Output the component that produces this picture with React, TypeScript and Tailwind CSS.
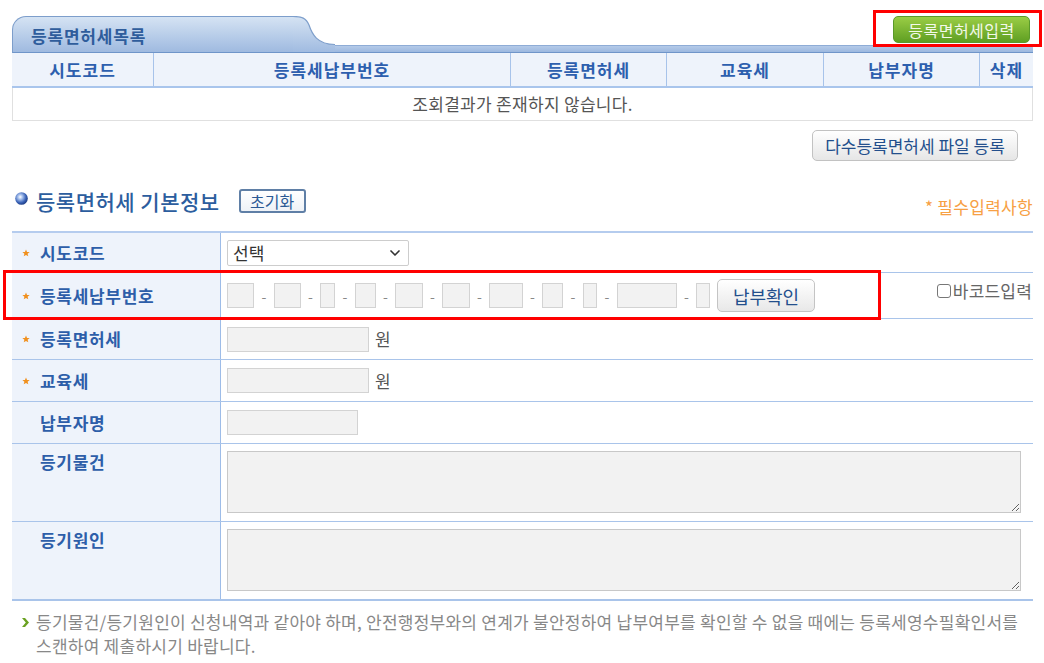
import React from "react";
import { ChevronDown } from "lucide-react";

const listColumns = ["시도코드", "등록세납부번호", "등록면허세", "교육세", "납부자명", "삭제"];

// payment number boxes: width class + width of the dash gap that follows
const payBoxes = [
  { w: "w-[27px]", dash: "w-[20px]" },
  { w: "w-[27px]", dash: "w-[19px]" },
  { w: "w-[15px]", dash: "w-[20px]" },
  { w: "w-[21px]", dash: "w-[19px]" },
  { w: "w-[28px]", dash: "w-[19px]" },
  { w: "w-[28px]", dash: "w-[19px]" },
  { w: "w-[34px]", dash: "w-[19px]" },
  { w: "w-[21px]", dash: "w-[20px]" },
  { w: "w-[14px]", dash: "w-[20px]" },
  { w: "w-[60px]", dash: "w-[19px]" },
  { w: "w-[14px]", dash: "" },
];

function Star() {
  return (
    <svg width="8" height="8" viewBox="0 0 10 10" className="shrink-0">
      <polygon
        points="5,0.5 6.3,3.6 9.6,3.8 7,5.9 7.9,9.2 5,7.4 2.1,9.2 3,5.9 0.4,3.8 3.7,3.6"
        fill="#f0901e"
      />
    </svg>
  );
}

function FormRow({
  label,
  required,
  height,
  top,
  children,
}: {
  label: string;
  required?: boolean;
  height: string;
  top?: boolean;
  children: React.ReactNode;
}) {
  return (
    <div className={`grid grid-cols-[209px_1fr] border-b border-[#a9c4ea] box-border ${height}`}>
      <div
        className={`flex bg-[#eef3fb] border-r border-[#9dbce8] pl-[10px] ${
          top ? "items-start pt-[6px]" : "items-center"
        }`}
      >
        <span className="w-[18px] flex items-center h-[24px]">{required && <Star />}</span>
        <span className="text-[17px] leading-[24px] font-bold tracking-[0.7px] text-[#2d5ea9]">{label}</span>
      </div>
      <div className={`flex pl-[6px] pr-[11px] ${top ? "items-start pt-[7px]" : "items-center"}`}>
        {children}
      </div>
    </div>
  );
}

export default function App() {
  return (
    <div className="relative w-[1044px] h-[663px] overflow-hidden bg-white pt-[16px] pl-[12px] pr-[11px] font-['Noto_Sans_CJK_KR','Noto_Sans',sans-serif]">
      {/* tab header */}
      <div className="flex h-[37px]">
        <div className="w-[281px] h-[37px] rounded-tl-[14px] border-t border-l border-[#7d9ecb] border-b border-b-[#6f95c9] bg-linear-to-b from-[#d5e3f3] to-[#9fbae0] pl-[18px] pt-[7px] box-border">
          <span className="text-[17px] leading-[24px] font-bold tracking-[0.8px] text-[#2f5d9c]">등록면허세목록</span>
        </div>
        <svg width="42" height="37" viewBox="0 0 42 37" className="shrink-0">
          <defs>
            <linearGradient id="tabg" x1="0" y1="0" x2="0" y2="1">
              <stop offset="0" stopColor="#d5e3f3" />
              <stop offset="1" stopColor="#9fbae0" />
            </linearGradient>
          </defs>
          <path d="M0 0.5 C9 0.5 13 2 16 9 C19 18 24 28.5 42 28.5 L42 37 L0 37 Z" fill="url(#tabg)" />
          <path d="M0 0.5 C9 0.5 13 2 16 9 C19 18 24 28.5 42 28.5" fill="none" stroke="#7d9ecb" strokeWidth="1.2" />
          <line x1="0" y1="36.5" x2="42" y2="36.5" stroke="#6f95c9" strokeWidth="1" />
        </svg>
        <div className="flex-1 flex flex-col">
          <div className="flex justify-end pr-[3px]">
            <button className="h-[27px] w-[137px] rounded-[5px] border border-[#5a9a2a] bg-linear-to-b from-[#9acd45] to-[#5f9f22] text-[16px] leading-[24px] tracking-[0.5px] text-[#f3f9ea]">
              등록면허세입력
            </button>
          </div>
          <div className="mt-[2px] h-[8px] border-t border-[#8eacd6] border-b border-b-[#6f95c9] bg-linear-to-b from-[#b4cae8] to-[#9cb8df]" />
        </div>
      </div>

      {/* list table */}
      <div className="grid grid-cols-[142px_357px_156px_157px_156px_1fr] h-[35px] bg-[#eef3fb] border-b-2 border-[#a9c5ec]">
        {listColumns.map((c, i) => (
          <div
            key={c}
            className={`flex items-center justify-center text-[17px] font-bold tracking-[1px] text-[#2d5fae] ${
              i < listColumns.length - 1 ? "border-r border-[#a7c3ea]" : ""
            }`}
          >
            {c}
          </div>
        ))}
      </div>
      <div className="h-[33px] flex items-center justify-center border-x border-b border-[#e0e0e0] text-[17px] tracking-[0.3px] text-[#555]">
        조회결과가 존재하지 않습니다.
      </div>

      <div className="flex justify-end pr-[15px] mt-[9px]">
        <button className="h-[31px] w-[206px] rounded-[5px] border border-[#c2c2c2] bg-linear-to-b from-white to-[#e6e6e6] text-[17px] text-[#234f8c]">
          다수등록면허세 파일 등록
        </button>
      </div>

      {/* section heading */}
      <div className="flex items-start justify-between mt-[25px]">
        <div className="flex items-center h-[30px]">
          <svg width="13" height="13" viewBox="0 0 13 13" className="ml-[3px] mr-[8px] -mt-[5px]">
            <defs>
              <radialGradient id="dotg" cx="0.4" cy="0.38" r="0.6">
                <stop offset="0" stopColor="#ffffff" />
                <stop offset="0.3" stopColor="#a9c2ee" />
                <stop offset="0.75" stopColor="#3a63b7" />
                <stop offset="1" stopColor="#22438d" />
              </radialGradient>
            </defs>
            <circle cx="6.5" cy="6.5" r="6.3" fill="url(#dotg)" />
          </svg>
          <span className="text-[21px] leading-[30px] font-medium text-[#2c5d9e] tracking-[0.5px]">등록면허세 기본정보</span>
          <button className="ml-[19px] h-[24px] w-[67px] rounded-[3px] border-2 border-[#5f7fa6] bg-linear-to-b from-white to-[#eef2f7] text-[16px] leading-[18px] text-[#2c5a95]">
            초기화
          </button>
        </div>
        <span className="mt-[10px] text-[17px] leading-[22px] tracking-[0.3px] text-[#f7a044]">* 필수입력사항</span>
      </div>

      {/* form table */}
      <div className="mt-[13px] border-t-2 border-[#b5ccee]">
        <FormRow label="시도코드" required height="h-[40px]">
          <div className="flex items-center justify-between w-[182px] h-[26px] border border-[#cdcdcd] rounded-[2px] bg-white pl-[5px] pr-[5px]">
            <span className="text-[17px] leading-[24px] text-[#333]">선택</span>
            <ChevronDown size={16} strokeWidth={2.5} className="text-[#333]" />
          </div>
        </FormRow>
        <FormRow label="등록세납부번호" required height="h-[46px]">
          <div className="flex items-center">
            {payBoxes.map((b, i) => (
              <React.Fragment key={i}>
                <div className={`${b.w} h-[25px] border border-[#d3d3d3] bg-[#f2f2f2]`} />
                {b.dash && (
                  <span className={`${b.dash} text-center text-[14px] leading-[20px] text-[#888]`}>-</span>
                )}
              </React.Fragment>
            ))}
            <button className="ml-[7px] h-[33px] w-[98px] rounded-[5px] border border-[#c4c4c4] bg-linear-to-b from-white to-[#e8e8e8] text-[18px] leading-[24px] text-[#234f8c]">
              납부확인
            </button>
          </div>
          <label className="ml-auto -mr-[10px] self-start mt-[7px] flex items-center">
            <span className="w-[14px] h-[14px] rounded-[3px] border-[1.5px] border-[#777] bg-white mr-[2px]" />
            <span className="text-[17px] leading-[22px] tracking-[0.2px] text-[#666]">바코드입력</span>
          </label>
        </FormRow>
        <FormRow label="등록면허세" required height="h-[41px]">
          <div className="w-[142px] h-[25px] border border-[#d3d3d3] bg-[#f2f2f2]" />
          <span className="ml-[6px] text-[17px] text-[#555]">원</span>
        </FormRow>
        <FormRow label="교육세" required height="h-[42px]">
          <div className="w-[142px] h-[25px] border border-[#d3d3d3] bg-[#f2f2f2]" />
          <span className="ml-[6px] text-[17px] text-[#555]">원</span>
        </FormRow>
        <FormRow label="납부자명" height="h-[42px]">
          <div className="w-[131px] h-[25px] border border-[#d3d3d3] bg-[#f2f2f2]" />
        </FormRow>
        <FormRow label="등기물건" height="h-[78px]" top>
          <textarea className="w-[794px] h-[62px] border border-[#c8c8c8] bg-[#f2f2f2] outline-none" />
        </FormRow>
        <div className="border-b border-[#a9c4ea]">
          <FormRow label="등기원인" height="h-[78px]" top>
            <textarea className="w-[794px] h-[62px] border border-[#c8c8c8] bg-[#f2f2f2] outline-none" />
          </FormRow>
        </div>
      </div>

      {/* note */}
      <div className="flex mt-[9px] pl-[10px]">
        <svg width="7" height="9" viewBox="0 0 7 9" className="shrink-0 mt-[8px] mr-[7px]">
          <polygon points="0,0 3,0 7,4.5 3,9 0,9 3.8,4.5" fill="#6aa121" />
        </svg>
        <p className="text-[17px] leading-[24px] tracking-[0.25px] text-[#888] whitespace-nowrap">
          등기물건/등기원인이 신청내역과 같아야 하며, 안전행정부와의 연계가 불안정하여 납부여부를 확인할 수 없을 때에는 등록세영수필확인서를
          <br />
          스캔하여 제출하시기 바랍니다.
        </p>
      </div>

      {/* annotation boxes */}
      <div className="absolute left-[873px] top-[10px] w-[169px] h-[37px] border-[3px] border-[#ff0000] pointer-events-none" />
      <div className="absolute left-[3px] top-[270px] w-[878px] h-[50px] border-[3px] border-[#ff0000] pointer-events-none" />
    </div>
  );
}
